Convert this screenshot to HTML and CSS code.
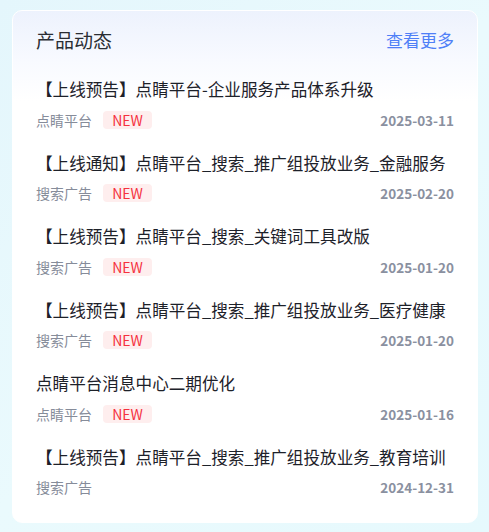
FILE: index.html
```html
<!DOCTYPE html>
<html lang="zh">
<head>
<meta charset="utf-8">
<link rel="stylesheet" href="styles.css">
</head>
<body>
<div class="card">
  <div class="header">
    <span class="title">产品动态</span>
    <span class="more">查看更多</span>
  </div>
  <ul class="list">
    <li class="item">
      <div class="item-title">【上线预告】点睛平台-企业服务产品体系升级</div>
      <div class="meta"><span class="source">点睛平台</span><span class="badge">NEW</span><span class="date">2025-03-11</span></div>
    </li>
    <li class="item">
      <div class="item-title">【上线通知】点睛平台_搜索_推广组投放业务_金融服务</div>
      <div class="meta"><span class="source">搜索广告</span><span class="badge">NEW</span><span class="date">2025-02-20</span></div>
    </li>
    <li class="item">
      <div class="item-title">【上线预告】点睛平台_搜索_关键词工具改版</div>
      <div class="meta"><span class="source">搜索广告</span><span class="badge">NEW</span><span class="date">2025-01-20</span></div>
    </li>
    <li class="item">
      <div class="item-title">【上线预告】点睛平台_搜索_推广组投放业务_医疗健康</div>
      <div class="meta"><span class="source">搜索广告</span><span class="badge">NEW</span><span class="date">2025-01-20</span></div>
    </li>
    <li class="item">
      <div class="item-title">点睛平台消息中心二期优化</div>
      <div class="meta"><span class="source">点睛平台</span><span class="badge">NEW</span><span class="date">2025-01-16</span></div>
    </li>
    <li class="item">
      <div class="item-title">【上线预告】点睛平台_搜索_推广组投放业务_教育培训</div>
      <div class="meta"><span class="source">搜索广告</span><span class="date">2024-12-31</span></div>
    </li>
  </ul>
</div>
</body>
</html>
```
FILE: styles.css
```css
html, body {
  margin: 0;
  padding: 0;
}
body {
  width: 489px;
  height: 532px;
  box-sizing: border-box;
  padding: 10px 11px 0 12px;
  background: linear-gradient(135deg, #e4f6fc 0%, #eafafd 50%, #e6f9fd 100%);
  font-family: "Noto Sans CJK SC", "Noto Sans", sans-serif;
}
.card {
  box-sizing: border-box;
  border-radius: 10px;
  border: 1px solid #ffffff;
  background: linear-gradient(180deg, #edf2fd 0px, #f8faff 50px, #ffffff 90px);
  padding: 15px 23px 25px 23px;
}
.header {
  display: flex;
  justify-content: space-between;
  align-items: center;
  height: 28px;
}
.title {
  font-size: 19px;
  color: #2a2d33;
  line-height: 28px;
}
.more {
  font-size: 17px;
  color: #4f7ff7;
  line-height: 28px;
}
.list {
  list-style: none;
  margin: 23px 0 0 0;
  padding: 0;
}
.item {
  margin-bottom: 21px;
}
.item:last-child {
  margin-bottom: 0;
}
.item-title {
  font-size: 16.6px;
  line-height: 24px;
  color: #1d2129;
  white-space: nowrap;
}
.meta {
  display: flex;
  align-items: center;
  height: 20px;
  margin-top: 8.5px;
}
.source {
  font-size: 14px;
  color: #868c9a;
  line-height: 20px;
}
.badge {
  margin-left: 11px;
  height: 18px;
  width: 49px;
  box-sizing: border-box;
  border-radius: 4px;
  background: #feeeee;
  color: #f5323e;
  font-size: 14px;
  line-height: 18px;
  text-align: center;
}
.date {
  margin-left: auto;
  font-size: 13.5px;
  font-weight: 600;
  color: #8a90a0;
  line-height: 20px;
}
```
